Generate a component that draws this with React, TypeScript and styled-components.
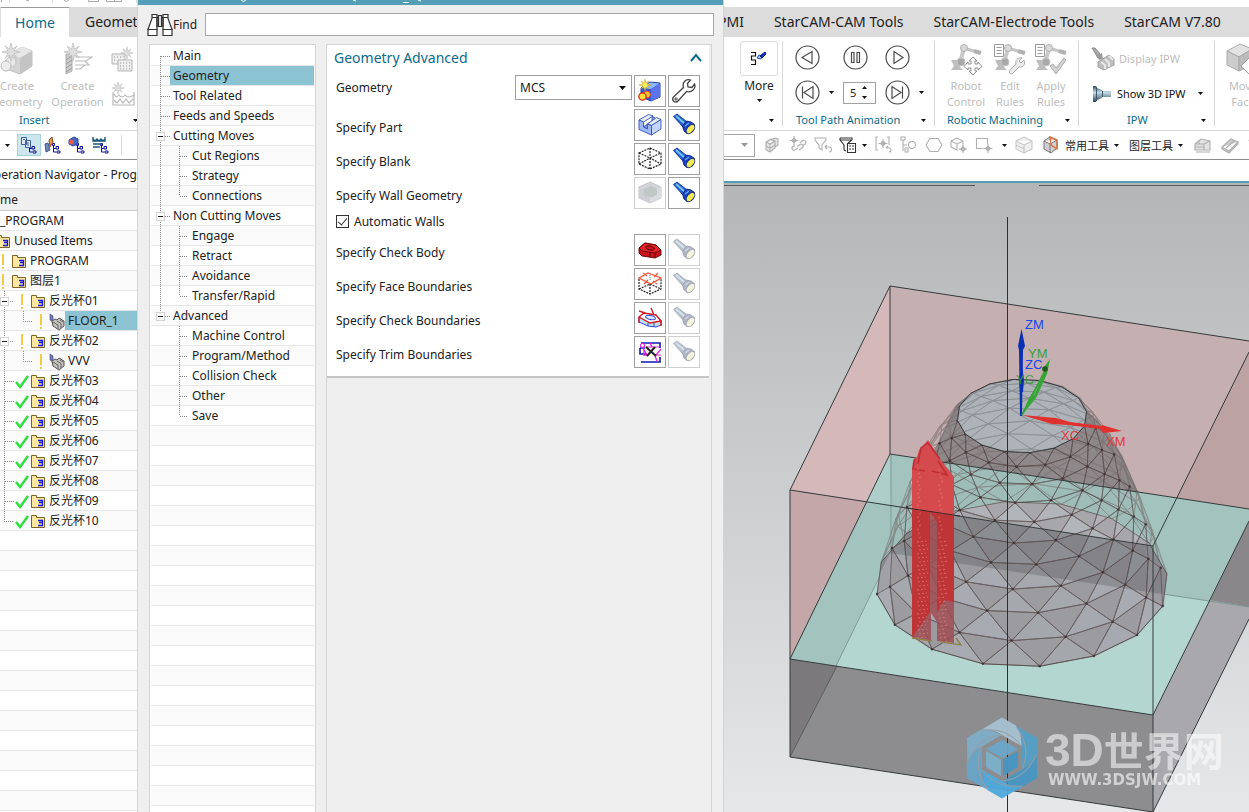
import React from "react";
import styled, { createGlobalStyle, css } from "styled-components";

const GlobalStyle = createGlobalStyle`
  * { box-sizing: border-box; }
  body { margin: 0; background: #fff; }
  body, button, input, select {
    font-family: "Noto Sans", "Noto Sans CJK SC", sans-serif;
    font-size: 12px;
    color: #222;
  }
  button { border: 0; padding: 0; background: none; cursor: pointer; }
  svg { display: block; flex: none; }
  ul { list-style: none; margin: 0; padding: 0; }
`;

const teal = "#0b6a8c";
const accent = "#549fb7";
const selection = "#8cc3d2";

/* ---------- shell ---------- */

const Shell = styled.div`
  display: grid;
  grid-template-columns: 137px 587px minmax(0, 1fr);
  height: 100vh;
  overflow: hidden;
  background: #fff;
`;

const Pane = styled.div`
  display: flex;
  flex-direction: column;
  min-width: 0;
  min-height: 0;
  overflow: hidden;
`;

const QuickBar = styled.div`
  height: 7px;
  flex: none;
  overflow: hidden;
`;

const TabBar = styled.nav<{ $indent?: number; $gap?: number }>`
  display: flex;
  flex: none;
  height: 30px;
  background: #dcdcdc;
  padding-left: ${(p) => p.$indent ?? 0}px;
  gap: ${(p) => p.$gap ?? 0}px;
  white-space: nowrap;
`;

const Tab = styled.button<{ $active?: boolean; $clipped?: boolean; $color?: string }>`
  flex: none;
  font-size: 14px;
  line-height: 30px;
  color: ${(p) => p.$color ?? "#222"};
  ${(p) => p.$clipped && "margin-left: -6px;"}
  ${(p) =>
    p.$active &&
    css`
      width: 68px;
      background: #fff;
      border-top: 1px solid #999;
      color: ${teal};
      line-height: 28px;
    `}
`;

const Ribbon = styled.div`
  display: flex;
  flex: none;
  height: 94px;
  border-bottom: 1px solid #d8d8d8;
  overflow: hidden;
`;

const Group = styled.section<{ $width: number; $last?: boolean }>`
  flex: none;
  display: flex;
  flex-direction: column;
  width: ${(p) => p.$width}px;
  margin: 4px 0;
  border-right: ${(p) => (p.$last ? "0" : "1px solid #d8d8d8")};
`;

const GroupBody = styled.div<{ $pad?: number }>`
  flex: 1;
  display: flex;
  padding-left: ${(p) => p.$pad ?? 0}px;
`;

const GroupTitle = styled.div<{ $pad?: number; $end?: number }>`
  display: flex;
  align-items: center;
  justify-content: space-between;
  height: 12px;
  padding: 0 ${(p) => p.$end ?? 8}px 0 ${(p) => p.$pad ?? 12}px;
  font-size: 11px;
  line-height: 12px;
  color: ${teal};
`;

const BigButton = styled.button<{ $width: number; $muted?: boolean; $clipped?: boolean }>`
  flex: none;
  display: flex;
  flex-direction: column;
  align-items: center;
  width: ${(p) => p.$width}px;
  font-size: ${(p) => (p.$muted ? 11 : 12)}px;
  line-height: 16px;
  color: ${(p) => (p.$muted ? "#bdbdbd" : "#222")};
  white-space: nowrap;
  ${(p) => p.$clipped && "margin-left: -10px;"}
`;

const CaretSlot = styled.span`
  display: grid;
  place-items: center;
  height: 12px;
`;

const IconSlot = styled.span<{ $framed?: boolean }>`
  display: grid;
  place-items: center;
  width: 38px;
  height: 35px;
  margin-bottom: 2px;
  ${(p) => p.$framed && "border: 1px solid #dcdcdc; border-radius: 3px;"}
`;

const SelectionBar = styled.div<{ $pad?: number }>`
  display: flex;
  align-items: center;
  flex: none;
  height: 29px;
  padding-left: ${(p) => p.$pad ?? 0}px;
  border-bottom: 1px solid #8d8d8d;
  white-space: nowrap;
  overflow: hidden;
`;

const ToolButton = styled.button<{ $width?: number; $on?: boolean }>`
  flex: none;
  display: grid;
  place-items: center;
  width: ${(p) => p.$width ?? 24}px;
  height: 22px;
  ${(p) => p.$on && "background: #cde6ec; border: 1px solid #a8d3de;"}
`;

const Divider = styled.span`
  height: 20px;
  margin-left: 8px;
  border-left: 1px solid #d8d8d8;
`;

const MenuButton = styled.button`
  flex: none;
  display: flex;
  align-items: center;
  gap: 5px;
  padding-right: 10px;
  font-size: 11px;
`;

const Caret = ({ color = "#111", up = false }: { color?: string; up?: boolean }) => (
  <svg width="5" height="3" viewBox="0 0 5 3">
    <path d={up ? "M0 3H5L2.5 0Z" : "M0 0H5L2.5 3Z"} fill={color} />
  </svg>
);

/* ---------- ribbon icons ---------- */

const Burst = ({ x, y, fill = "#dedede", stroke = "#bbb" }: { x: number; y: number; fill?: string; stroke?: string }) => (
  <path
    transform={`translate(${x} ${y})`}
    d="M0-9L1.500-3 6-6 3-1.500 9 0 3 1.500 6 6 1.500 3 0 9-1.500 3-6 6-3 1.500-9 0-3-1.500-6-6-1.500-3Z"
    fill={fill}
    stroke={stroke}
    strokeWidth=".7"
  />
);

const CreateGeometryIcon = () => (
  <svg width="34" height="32" viewBox="0 0 34 32">
    <path d="M9 12L22 4 32 8V23L20 31 9 27Z" fill="#d3d3d3" stroke="#c0c0c0" />
    <path d="M9 12L22 4 32 8 20 15Z" fill="#e6e6e6" />
    <path d="M20 15L32 8V23L20 31Z" fill="#c4c4c4" />
    <path d="M4 18L10 14 15 23 8 28Z" fill="#dadada" />
    <circle cx="11" cy="19" r="5" fill="#e8e8e8" stroke="#c4c4c4" />
    <circle cx="6" cy="23" r="5" fill="#ececec" stroke="#bbb" />
    <Burst x={11} y={9} />
  </svg>
);

const CreateOperationIcon = () => (
  <svg width="30" height="32" viewBox="0 0 30 32">
    <path d="M3 11H9V28L3 31Z" fill="#ccc" stroke="#b0b0b0" />
    <path d="M3 17L9 13M3 21L9 17M3 25L9 21M3 29L9 25" stroke="#999" />
    <path d="M12 14H29L23 18H12M12 18H22L26 22H12M12 26H17L22 22" fill="none" stroke="#bcbcbc" strokeWidth="1.200" />
    <Burst x={10} y={9} />
  </svg>
);

const PatternIcon = ({ wave = false }: { wave?: boolean }) => (
  <svg width="24" height="28" viewBox="0 0 24 28">
    {wave ? (
      <path d="M2 12V25H23V12M3 14Q5 19 8 15 11 19 14 15 17 19 23 15M3 20L6 23 9 19 12 23 15 19 18 23 22 19" fill="none" stroke="#b8b8b8" strokeWidth="1.200" />
    ) : (
      <>
        <path d="M1 9H14V19H1Z" fill="#eee" stroke="#b5b5b5" />
        <path d="M7 15H21V26H7Z" fill="#eee" stroke="#b5b5b5" />
        <path d="M3 12H12M3 15H6M9 18H19M9 21H19M9 24H19" stroke="#999" strokeDasharray="1 2" />
      </>
    )}
    <g transform={wave ? "translate(7 8) scale(.7)" : "translate(16 8) scale(.7)"}>
      <Burst x={0} y={0} />
    </g>
  </svg>
);

const RobotIcon = ({ kind }: { kind: "move" | "wrench" | "check" }) => (
  <svg width="34" height="32" viewBox="0 0 34 32">
    {kind !== "move" && (
      <path d="M1.500 1.500H10.500V13.500H1.500ZM3.500 4.500H8.500M3.500 7.500H8.500M3.500 10.500H8.500" fill="#fff" stroke="#9a9a9a" />
    )}
    <path d="M2 17H11V24L14 27H2L5 23Z" fill="#bdbdbd" />
    <path d="M11 19L15 6" stroke="#c9c9c9" strokeWidth="4" />
    <path d="M15 5L31 10" stroke="#c4c4c4" strokeWidth="3" />
    <path d="M25 8L32 10" stroke="#b2b2b2" strokeWidth="4" />
    <circle cx="15" cy="5" r="3.500" fill="#d9d9d9" stroke="#b0b0b0" />
    <circle cx="12" cy="19" r="4" fill="#a8a8a8" stroke="#c4c4c4" />
    {kind === "move" && (
      <path
        d="M24 14L28 18H26V21H29V19L33 23.500 29 27V25H26V28H28L24 32 20 28H22V25H19V27L15 23.500 19 19V21H22V18H20Z"
        fill="#fff"
        stroke="#909090"
      />
    )}
    {kind === "wrench" && (
      <path d="M31 17L28 20 26 18 29 15C24 14 22 18 23 21L18 26C14 30 18 33 21 29L26 24C30 25 33 21 31 17Z" fill="#ececec" stroke="#aaa" />
    )}
    {kind === "check" && <path d="M16 23L19 21 22 25 30 15 32 17 22 31Z" fill="#d2d2d2" stroke="#aaa" />}
  </svg>
);

const MoreIcon = () => (
  <svg width="18" height="16" viewBox="0 0 18 16">
    <path d="M1 1.500H5.500V5H1.500V9H5.500V13.500H1M2 5H5M2 9H5" fill="none" stroke="#111" strokeWidth="1.200" />
    <path d="M7 7L9 4 12 5 11 8Z" fill="#8dd2ff" stroke="#2449b0" />
    <path d="M10 5L15 1 16 3 12 7Z" fill="#1034c8" stroke="#001b7a" />
  </svg>
);

const PlayerIcon = ({ kind }: { kind: "back" | "pause" | "play" | "first" | "last" }) => {
  const paths = {
    back: "M17 6.500V18.500L7 12.500Z",
    pause: "M8.500 7.500H11V17.500H8.500ZM14 7.500H16.500V17.500H14Z",
    play: "M9 6.500V18.500L18 12.500Z",
    first: "M18 6.500V18.500L9 12.500ZM7.500 6.500V18.500",
    last: "M7 6.500V18.500L16 12.500ZM17.500 6.500V18.500",
  };
  return (
    <svg width="25" height="25" viewBox="0 0 25 25">
      <circle cx="12.500" cy="12.500" r="11.500" fill="#fff" stroke="#4a4a4a" strokeWidth="1.200" />
      <path d={paths[kind]} fill="none" stroke="#4a4a4a" strokeWidth="1.200" />
    </svg>
  );
};

const DisplayIpwIcon = () => (
  <svg width="24" height="24" viewBox="0 0 24 24">
    <path d="M1 1L4 1 10 8 7 11Z" fill="#aaa" stroke="#8c8c8c" />
    <path d="M6 9L11 6 12 12 8 13Z" fill="#999" />
    <path d="M7 15L18 8 23 12V18L13 23 7 20Z" fill="#bdbdbd" stroke="#a0a0a0" />
    <path d="M10 15L14 18V22M14 12L18 16V20M18 9L22 13" fill="none" stroke="#e8e8e8" strokeWidth="2" />
  </svg>
);

const ShowIpwIcon = () => (
  <svg width="22" height="18" viewBox="0 0 22 18">
    <defs>
      <linearGradient id="steel" x1="0" y1="0" x2="0" y2="1">
        <stop offset="0" stopColor="#2f4a5a" />
        <stop offset=".4" stopColor="#c3dce8" />
        <stop offset="1" stopColor="#2c4453" />
      </linearGradient>
    </defs>
    <path d="M2 1H5L6 3 11 5V6H20V12H11V13L6 15 5 17H2Z" fill="url(#steel)" />
    <path d="M5.500 2V16M11.500 6V12" stroke="#3f5c6c" />
  </svg>
);

const MoveFaceIcon = () => (
  <svg width="34" height="32" viewBox="0 0 34 32">
    <path d="M1 8L14 1 26 6 13 14Z" fill="#e2e2e2" stroke="#aaa" />
    <path d="M1 8L13 14V28L1 22Z" fill="#cdcdcd" stroke="#aaa" />
    <path d="M13 14L26 6V22L13 28Z" fill="#bcbcbc" stroke="#aaa" />
    <path d="M24 14L33 23 24 32 15 23Z" fill="#fff" stroke="#999" />
  </svg>
);

/* ---------- selection bar icons ---------- */

type NavKind = "program" | "tool" | "geometry" | "method";

const NavViewIcon = ({ kind }: { kind: NavKind }) => (
  <svg width="18" height="18" viewBox="0 0 18 18">
    <path d="M9.500 8V16H12M9.500 12.500H12" fill="none" stroke="#0c0c9c" />
    <path d="M12 10.500H14.500V13H12ZM13 15H16V17H13ZM8.500 7.500H10.500V9.500H8.500Z" fill="#fff" stroke="#0c0c9c" />
    {kind === "program" && (
      <path d="M1.500 1.500H6.500V8.500H1.500ZM5.500 4.500H10.500V11.500H5.500ZM3 3.500H5M7 7H9M7 9H9" fill="#dfe6f4" stroke="#3e5f9b" />
    )}
    {kind === "tool" && (
      <>
        <path d="M1 8L4 7 6 14 2 16Z" fill="#7187b8" stroke="#3f5793" />
        <path d="M5 4L8 1 9 6 6 11Z" fill="#e49a4d" stroke="#8b4a24" />
      </>
    )}
    {kind === "geometry" && (
      <>
        <path d="M1 4L6 1 10 3V8L5 10 1 8Z" fill="#4468c8" stroke="#2d4390" />
        <circle cx="3.500" cy="6" r="2.500" fill="#e55a4c" />
      </>
    )}
    {kind === "method" && (
      <path d="M1 1V5H13V1M1 3L3 5 5 3 7 5 9 3 11 5 13 3M1 8H10M1 11H8" fill="none" stroke="#1c5a78" strokeWidth="1.400" />
    )}
  </svg>
);

const GlyphIcon = ({ d, color = "#b0b0b0", fill = "none" }: { d: string; color?: string; fill?: string }) => (
  <svg width="18" height="18" viewBox="0 0 18 18">
    <path d={d} fill={fill} stroke={color} strokeWidth="1.100" />
  </svg>
);

const glyphs = {
  blocks: "M3 6L8 3 12 5V12L7 16 3 14ZM8 4L12 2 15 3V9L12 11M3 6L7 8 12 5M7 8V16M3 10L7 12 12 9",
  target: "M3 1H1V14H3M12 1H14V9M8 3V12M3.500 7.500H12.500M8 5L10.500 7.500 8 10 5.500 7.500ZM11 12H14A2 2 0 0 1 14 16M11 12L13 10",
  chain: "M5 0V9M0.500 4.500H9.500M5 2L7.500 4.500 5 7 2.500 4.500ZM8 10.500L11 8.500A2 2 0 0 1 13 12L10 14M9 12L6 14A2 2 0 0 1 4 10.500L6 9.500M11 6.500L14 4.500A2 2 0 0 1 16 8L14 9.500",
  funnelBack: "M1 2H12V4L8 9V14L5 12V9L1 4ZM11 11H15A2 2 0 0 1 15 16M11 11L13 9M11 11L13 13",
  funnelList: "M1 2H13V4L9 7M1 4L5 9V14L7 15M1 2V4H12M8.500 7.500H16.500V16.500H8.500ZM10 10H12M13 10H15M10 13H12M13 13H15",
  tree: "M1 1H5V4H1ZM3 4V15M3 9H7M5 12H8V16H5V12M9 6H11M12 5.500A3.500 3.500 0 1 1 12 12.500 3.500 3.500 0 1 1 12 5.500",
  hexagon: "M5 2.500H13L17 9 13 15.500H5L1 9Z",
  cubeTarget: "M1 5L7 2 13 5V9M1 5L7 8 13 5M1 5V11L7 14V8M13 9V17M9 13H17M13 10.500L15.500 13 13 15.500 10.500 13Z",
  boxTarget: "M8 12.500H1.500V2.500H12.500V8M13 8V17M8.500 12.500H17.500M13 10L15.500 12.500 13 15 10.500 12.500Z",
  cube: "M1 5L9 1 17 5V13L9 17 1 13ZM1 5L9 9 17 5M9 9V17M1 9L9 13",
  cubeOpen: "M2 5L8 1 15 4V12L9 17 2 13ZM2 5L8 8 15 4M8 8V17",
  box: "M1 8L7 3 16 5V14H1ZM1 8H10V14M10 8L16 5M5 4V8M1 11H10M2 16H16",
  plate: "M1 11L10 3 17 6 8 15ZM5 12L13 5M1 11V13L8 17 17 8V6",
};

/* ---------- operation navigator ---------- */

const NavTitle = styled.h2`
  flex: none;
  margin: 0;
  height: 29px;
  font-size: 12px;
  font-weight: 400;
  line-height: 29px;
  white-space: nowrap;
  direction: rtl;
  border-bottom: 1px solid #ddd;
`;

const NavHeader = styled.div`
  flex: none;
  height: 22px;
  background: #efefef;
  border-bottom: 1px solid #ccc;
  line-height: 22px;
`;

const TreeList = styled.ul`
  flex: 1;
  min-height: 0;
  overflow: hidden;
  background: repeating-linear-gradient(#fff 0 19px, #e6e6e6 19px 20px, #fafafa 20px 39px, #e6e6e6 39px 40px);
`;

const TreeRow = styled.li`
  display: flex;
  height: 20px;
  white-space: nowrap;
`;

const TreeLabel = styled.button<{ $selected?: boolean; $flush?: boolean }>`
  flex: 1;
  height: 19px;
  padding-left: ${(p) => (p.$flush ? 0 : 3)}px;
  line-height: 19px;
  text-align: left;
  background: ${(p) => (p.$selected ? selection : "transparent")};
`;

const dots = { stroke: "#888", strokeDasharray: "1 1", fill: "none" };

const FolderIcon = ({ x }: { x: number }) => (
  <g transform={`translate(${x} 3)`}>
    <path d="M.5 13.500V1.500H5.500V3.500H13.500V13.500Z" fill="#fbe79f" stroke="#7d6425" />
    <path d="M7 6.500H11.500V8.500H8M8 8.500H11.500V11.500H7" fill="none" stroke="#1616e0" strokeWidth="1.300" />
  </g>
);

const Exclaim = ({ x }: { x: number }) => (
  <g fill="#f7c948">
    <rect x={x} y="3" width="2" height="11" />
    <rect x={x} y="16" width="2" height="2" />
  </g>
);

const Minus = ({ x }: { x: number }) => (
  <g>
    <rect x={x - 4 + 0.5} y="6.500" width="8" height="8" fill="#fff" stroke="#d2d2d2" />
    <path d={`M${x - 2} 10.500H${x + 3}`} stroke="#222" />
  </g>
);

const OperationIcon = ({ x }: { x: number }) => (
  <g transform={`translate(${x} 2)`}>
    <path d="M1 1L4 3V9L1 7Z" fill="#6d72b4" stroke="#474a80" strokeWidth=".6" />
    <path d="M3 8L6 6 8 7 10 5 15 8V13L10 17 4 13Z" fill="#c6c2be" stroke="#555" />
    <path d="M4 9L9 12V16M8 8L12 10.500V15M11 7L14 9" stroke="#666" fill="none" />
  </g>
);

type NavNode = { kind: "root" | "unused" | "top" | "group" | "op" | "done" | "last"; name: string; selected?: boolean };

const navNodes: NavNode[] = [
  { kind: "root", name: "_PROGRAM" },
  { kind: "unused", name: "Unused Items" },
  { kind: "top", name: "PROGRAM" },
  { kind: "top", name: "图层1" },
  { kind: "group", name: "反光杯01" },
  { kind: "op", name: "FLOOR_1", selected: true },
  { kind: "group", name: "反光杯02" },
  { kind: "op", name: "VVV" },
  ...["03", "04", "05", "06", "07", "08", "09"].map((n) => ({ kind: "done" as const, name: "反光杯" + n })),
  { kind: "last", name: "反光杯10" },
];

const navIndent = { root: 0, unused: 11, top: 27, group: 46, op: 65, done: 46, last: 46 };

const NavGuide = ({ kind }: { kind: NavNode["kind"] }) => {
  const w = navIndent[kind];
  if (!w) return null;
  return (
    <svg width={w} height="20" viewBox={`0 0 ${w} 20`}>
      {kind === "unused" && <FolderIcon x={-4} />}
      {kind === "top" && (
        <>
          <Exclaim x={2} />
          <FolderIcon x={12} />
        </>
      )}
      {kind === "group" && (
        <>
          <path d="M4.500 0V20M8 10.500H14" {...dots} />
          <Minus x={4} />
          <Exclaim x={21} />
          <FolderIcon x={31} />
        </>
      )}
      {kind === "op" && (
        <>
          <path d="M4.500 0V20M23.500 0V10.500H32" {...dots} />
          <Exclaim x={40} />
          <OperationIcon x={49} />
        </>
      )}
      {(kind === "done" || kind === "last") && (
        <>
          <path d={kind === "last" ? "M4.500 0V10.500H14" : "M4.500 0V20M5 10.500H14"} {...dots} />
          <path d="M16 11L20 16 28 5" fill="none" stroke="#2be03b" strokeWidth="2.400" />
          <FolderIcon x={31} />
        </>
      )}
    </svg>
  );
};

/* ---------- dialog ---------- */

const Dialog = styled.section`
  display: flex;
  flex-direction: column;
  min-height: 0;
  background: #efefef;
  border: solid #d4d4d4;
  border-width: 0 1px;
`;

const DialogTitle = styled.header`
  flex: none;
  height: 5px;
  background: ${accent};
`;

const FindRow = styled.label`
  display: flex;
  align-items: center;
  flex: none;
  height: 39px;
  padding: 0 9px;
`;

const FindInput = styled.input`
  flex: 1;
  height: 23px;
  margin-left: 8px;
  border: 1px solid #a6a6a6;
  background: #fff;
`;

const DialogBody = styled.div`
  flex: 1;
  min-height: 0;
  display: flex;
  gap: 10px;
  padding: 0 11px;
`;

const SidePanel = styled.nav`
  display: flex;
  width: 167px;
  padding: 1px 1px 0;
  border: 1px solid #d4d4d4;
  border-bottom: 0;
  background: #fff;
`;

const MainPanel = styled.div`
  flex: 1;
  padding-right: 2px;
  border: 1px solid #d4d4d4;
  border-bottom: 0;
`;

const Section = styled.section`
  padding: 0 9px 6px;
  background: #fff;
  border-bottom: 2px solid #c6c6c6;
`;

const SectionHead = styled.button`
  display: flex;
  align-items: center;
  justify-content: space-between;
  width: 100%;
  height: 30px;
  padding: 0 0 5px;
  margin-left: -2px;
  font-size: 14px;
  color: ${teal};
`;

const SectionHeadArrow = styled.span`
  margin-right: -4px;
`;

const FieldRow = styled.div<{ $top?: boolean }>`
  display: flex;
  align-items: ${(p) => (p.$top ? "flex-start" : "center")};
  gap: 2px;
  height: 32px;
  margin-bottom: 2px;
`;

const FieldLabel = styled.label<{ $top?: boolean }>`
  flex: 1;
  padding-top: ${(p) => (p.$top ? 4 : 5)}px;
  line-height: 17px;
`;

const IconButton = styled.button`
  display: grid;
  place-items: center;
  width: 32px;
  height: 32px;
  background: #fff;
  border: 1px solid #a0a0a0;
  &:disabled {
    border-color: #cfcfcf;
    cursor: default;
  }
  &:disabled svg {
    opacity: 0.4;
    filter: saturate(0.35);
  }
`;

const SelectBox = styled.div`
  display: grid;
  align-items: center;
  width: 117px;
  height: 25px;
  & > * {
    grid-area: 1 / 1;
  }
  svg {
    justify-self: end;
    margin-right: 6px;
    pointer-events: none;
  }
`;

const Select = styled.select`
  appearance: none;
  width: 100%;
  height: 25px;
  padding: 0 4px;
  border: 1px solid #a0a0a0;
  border-radius: 0;
  background: #fff;
`;

const CheckRow = styled.label`
  display: flex;
  align-items: center;
  gap: 5px;
  height: 21px;
  margin-bottom: 2px;
`;

const CheckBox = styled.input`
  appearance: none;
  display: grid;
  place-items: center;
  width: 13px;
  height: 13px;
  margin: 0;
  border: 1px solid #333;
  background: #fff;
  &:checked::after {
    content: "";
    width: 4px;
    height: 8px;
    margin-top: -2px;
    border: solid #333;
    border-width: 0 1px 1px 0;
    transform: rotate(40deg);
  }
`;

type TreeNode = { name: string; level: 1 | 2; open?: boolean; end?: boolean; selected?: boolean };

const dialogNodes: TreeNode[] = [
  { name: "Main", level: 1 },
  { name: "Geometry", level: 1, selected: true },
  { name: "Tool Related", level: 1 },
  { name: "Feeds and Speeds", level: 1 },
  { name: "Cutting Moves", level: 1, open: true },
  { name: "Cut Regions", level: 2 },
  { name: "Strategy", level: 2 },
  { name: "Connections", level: 2, end: true },
  { name: "Non Cutting Moves", level: 1, open: true },
  { name: "Engage", level: 2 },
  { name: "Retract", level: 2 },
  { name: "Avoidance", level: 2 },
  { name: "Transfer/Rapid", level: 2, end: true },
  { name: "Advanced", level: 1, open: true },
  { name: "Machine Control", level: 2 },
  { name: "Program/Method", level: 2 },
  { name: "Collision Check", level: 2 },
  { name: "Other", level: 2 },
  { name: "Save", level: 2, end: true },
];

const DialogGuide = ({ node, index }: { node: TreeNode; index: number }) => {
  const w = node.level === 1 ? 19 : 38;
  const rootLine = index === 0 ? "M9.500 10V20" : index < 13 ? "M9.500 0V20" : index === 13 ? "M9.500 0V10" : "";
  return (
    <svg width={w} height="20" viewBox={`0 0 ${w} 20`}>
      {rootLine && <path d={rootLine} {...dots} />}
      {node.level === 1 ? (
        <path d="M10 10.500H19" {...dots} />
      ) : (
        <path d={`M28.500 0V${node.end ? 10 : 20}M29 10.500H37`} {...dots} />
      )}
      {node.open && <Minus x={9} />}
    </svg>
  );
};

const Binoculars = () => (
  <svg width="26" height="24" viewBox="0 0 26 24">
    <g fill="#fff" stroke="#333" strokeWidth="1.200">
      <path d="M1 16.500H10V22.500H1ZM16 16.500H25V22.500H16Z" />
      <path d="M1 16.500L5 5.500V1.500H10V16.500ZM25 16.500L21 5.500V1.500H16V16.500Z" />
      <path d="M10 4.500H16V13.500H10ZM5 4.500H10M16 4.500H21" fill="none" />
      <path d="M11.500 13V2.500H14.500V13" fill="#efefef" />
    </g>
  </svg>
);

const Flashlight = () => (
  <svg width="24" height="24" viewBox="0 0 24 24">
    <path d="M1.500 3.500L5 1 14.500 8.500 10.500 13.500Z" fill="#2565cf" stroke="#123a9c" strokeWidth=".9" />
    <path d="M4 3L12 10" stroke="#7cc0ef" strokeWidth="1.800" />
    <path d="M10.500 13L14.500 8 19 9 22.500 11.500 15 20.500 12 18Z" fill="#1746c8" stroke="#0a1f80" strokeWidth=".9" />
    <path d="M13 13L17 10" stroke="#6aa6ee" strokeWidth="1.400" />
    <ellipse cx="18.500" cy="16" rx="5.400" ry="3.200" transform="rotate(-50 18.500 16)" fill="#f4ea52" stroke="#1a2c80" />
  </svg>
);

const GeometryNewIcon = () => (
  <svg width="24" height="24" viewBox="0 0 24 24">
    <path d="M3 9L12 3 22 4V18L13 22 3 18Z" fill="#3557d8" stroke="#2440a8" />
    <path d="M4 9L12 3.500 21.500 4.500 13 10Z" fill="#8fb8fb" />
    <path d="M13 10L22 4.500V18L13 22Z" fill="#5a74ee" />
    <circle cx="9" cy="15.500" r="3.400" fill="#ffc52e" stroke="#e4452a" />
    <circle cx="4.500" cy="17.500" r="3.600" fill="#ffdf3a" stroke="#e4301a" strokeWidth="1.400" />
    <g transform="translate(7 6) scale(.68)">
      <Burst x={0} y={0} fill="#fdf05a" stroke="#b99a18" />
    </g>
  </svg>
);

const WrenchIcon = () => (
  <svg width="24" height="24" viewBox="0 0 24 24">
    <path
      d="M18.500 1C14-.5 10 3.500 11.500 8.500L1.500 18C-1 21 3.500 25 6 22L14.500 12.500C19.500 14 24.500 9.500 22.500 5L20 8.500 16 8 15.500 4.500Z"
      fill="#fff"
      stroke="#444"
      strokeWidth="1.300"
    />
    <circle cx="4" cy="20" r="1.200" fill="none" stroke="#444" />
  </svg>
);

const PartIcon = () => (
  <svg width="24" height="24" viewBox="0 0 24 24">
    <g stroke="#3a50c0" strokeWidth=".9" strokeLinejoin="round">
      <path d="M5 14L14 8V3L17 5 9 16Z" fill="#7a97ea" />
      <path d="M1 7L10.500 1.500 15 3 5.500 9Z" fill="#e6efff" />
      <path d="M9.500 11L18.500 4.500 23 6.500 13.500 12.500Z" fill="#e6efff" />
      <path d="M1 7L5.500 9V14L9.500 16V11L13.500 12.500V22L1 16.500Z" fill="#9db9f8" />
      <path d="M13.500 12.500L23 6.500V16L13.500 22Z" fill="#c3d6ff" />
    </g>
  </svg>
);

const BlankIcon = () => (
  <svg width="24" height="24" viewBox="0 0 24 24">
    <path
      d="M1 6L12 1 23 6V17L12 22 1 17ZM1 6L12 11 23 6M12 11V22M12 1V10M1 17L12 11 23 17"
      fill="none"
      stroke="#222"
      strokeWidth="1.200"
      strokeDasharray="2 1"
    />
  </svg>
);

const FaceBoundaryIcon = () => (
  <svg width="24" height="24" viewBox="0 0 24 24">
    <path d="M1 7V17L12 22 23 17V7M12 12V22M1 17L12 12 23 17" fill="none" stroke="#222" strokeWidth="1.200" strokeDasharray="2 1" />
    <path d="M1 6L10 1 23 6 13 12ZM5 1L9 4M20 1L16 5M6 12L10 8M15 9L19 12" fill="#fff" stroke="#f0583a" strokeWidth="1.300" />
    <path d="M12 3V8" stroke="#777" strokeDasharray="1 1" />
  </svg>
);

const WallIcon = () => (
  <svg width="24" height="24" viewBox="0 0 24 24">
    <path d="M1 6L12 1 23 6V17L12 22 1 17Z" fill="#8a96b8" stroke="#6a7084" />
    <path d="M5 8L13 5 19 8V14L15 17 6 14Z" fill="#4f7c70" />
    <path d="M1 7L5 8 6 14 12 17V22L1 17Z" fill="#80879e" />
    <path d="M12 17L19 14V8L23 6V17L12 22Z" fill="#a2a7b8" />
  </svg>
);

const CheckBodyIcon = () => (
  <svg width="24" height="24" viewBox="0 0 24 24">
    <g stroke="#5e0508" strokeWidth=".9">
      <path d="M1 10L7 5 18 7 23 12V17L17 20 4 18 1 15Z" fill="#c9141c" />
      <path d="M1 10L7 5 18 7 23 12 17 15 4 13Z" fill="#e2232c" />
      <ellipse cx="12" cy="10" rx="4.500" ry="2" transform="rotate(14 12 10)" fill="#c4141c" />
      <path d="M17 15V20M12 14.500V19" />
    </g>
  </svg>
);

const CheckBoundaryIcon = () => (
  <svg width="24" height="24" viewBox="0 0 24 24">
    <path d="M1 11V16L10 20 18 21 23 19V14L16 16Z" fill="#bfe0ec" stroke="#3448d8" />
    <path d="M1 11L6 7 18 9 23 15 12 17Z" fill="#fff" stroke="#d41a22" strokeWidth="1.400" />
    <path d="M1 5L7 7M13 2L16 9M1 11V17M23 15V20" stroke="#d41a22" strokeWidth="1.400" />
    <ellipse cx="12.500" cy="11.500" rx="5" ry="2" transform="rotate(12 12.500 11.500)" fill="#dfe6ff" stroke="#3448d8" />
    <path d="M10 17V20M16 17V21" stroke="#3448d8" />
  </svg>
);

const TrimIcon = () => (
  <svg width="24" height="24" viewBox="0 0 24 24">
    <path d="M3 3H22V8M2 8V14H9M2 8H7M3 22H22V17" fill="none" stroke="#1414b4" strokeWidth="1.600" />
    <path d="M12 3L14 7M6 10V15H9M17 16L19 21" stroke="#e020d8" strokeWidth="1.400" fill="none" />
    <circle cx="4.500" cy="5.500" r="2" fill="none" stroke="#e020d8" strokeWidth="1.200" />
    <path d="M5 8L9 15M23 9L18 15H23M8 7H21" fill="none" stroke="#e020d8" strokeWidth="1.200" />
    <path d="M8 7L18 16M17 7L9 16" stroke="#222" strokeWidth="2" />
  </svg>
);

type Field = { name: string; icon: React.ReactNode; muted?: boolean; lamp: boolean };

const upperFields: Field[] = [
  { name: "Specify Part", icon: <PartIcon />, lamp: true },
  { name: "Specify Blank", icon: <BlankIcon />, lamp: true },
  { name: "Specify Wall Geometry", icon: <WallIcon />, muted: true, lamp: true },
];

const lowerFields: Field[] = [
  { name: "Specify Check Body", icon: <CheckBodyIcon />, lamp: false },
  { name: "Specify Face Boundaries", icon: <FaceBoundaryIcon />, lamp: false },
  { name: "Specify Check Boundaries", icon: <CheckBoundaryIcon />, lamp: false },
  { name: "Specify Trim Boundaries", icon: <TrimIcon />, lamp: false },
];

const FieldLine = ({ field }: { field: Field }) => {
  const id = field.name.replace(/ /g, "-").toLowerCase();
  return (
    <FieldRow>
      <FieldLabel htmlFor={id}>{field.name}</FieldLabel>
      <IconButton id={id} disabled={field.muted}>
        {field.icon}
      </IconButton>
      <IconButton aria-label={`Display ${field.name}`} disabled={!field.lamp}>
        <Flashlight />
      </IconButton>
    </FieldRow>
  );
};

/* ---------- player controls ---------- */

const PlayerGrid = styled.div`
  display: grid;
  grid-template-columns: 25px 23px 33px 9px 25px 23px;
  grid-template-rows: 33px 37px;
  align-items: center;
  justify-items: center;
`;

const RoundButton = styled.button<{ $column: number }>`
  grid-column: ${(p) => p.$column};
  justify-self: start;
`;

const Spinner = styled.div`
  display: flex;
  align-items: center;
  grid-column: 3;
  width: 33px;
  height: 22px;
  border: 1px solid #a0a0a0;
`;

const SpinnerInput = styled.input`
  width: 18px;
  padding: 0 0 0 6px;
  border: 0;
  font-size: 11px;
`;

const SpinnerButtons = styled.div`
  display: grid;
  gap: 7px;
`;

const Commands = styled.div`
  display: flex;
  flex-direction: column;
`;

const Command = styled.button<{ $muted?: boolean }>`
  display: flex;
  align-items: center;
  gap: 4px;
  height: 35px;
  font-size: 11px;
  color: ${(p) => (p.$muted ? "#bdbdbd" : "#111")};
`;

const CommandText = styled.span`
  width: 77px;
  text-align: left;
`;

const ComboEnd = styled.button`
  flex: none;
  display: grid;
  place-items: center end;
  width: 31px;
  height: 23px;
  padding-right: 6px;
  border: solid #a6a6a6;
  border-width: 1px 1px 1px 0;
`;

const DocumentBar = styled.div`
  flex: none;
  height: 23px;
  border-bottom: 2px solid ${accent};
`;

const Viewport = styled.main`
  flex: 1;
  min-height: 0;
  background: linear-gradient(#b4b5b6, #c6c7c8 35%, #e6e7e9);
  svg {
    width: 100%;
    height: 100%;
  }
`;

/* ---------- 3D scene ---------- */

const rings = [
  { r: 146, y: 584 },
  { r: 139, y: 562 },
  { r: 131, y: 539 },
  { r: 124, y: 519 },
  { r: 116, y: 499 },
  { r: 108, y: 482 },
  { r: 101, y: 465 },
  { r: 92.5, y: 450.5 },
  { r: 83, y: 437.5 },
  { r: 74, y: 425 },
  { r: 65, y: 416 },
];
const SIDES = 16;

type Point = { x: number; y: number; front: boolean };

const vertex = (k: number, j: number): Point => {
  const start = k % 2 === 0 ? 7 : -4.25;
  const a = ((start + j * 22.5) * Math.PI) / 180;
  return { x: 1022 + rings[k].r * Math.sin(a), y: rings[k].y + rings[k].r * 0.567 * Math.cos(a), front: Math.cos(a) > -0.05 };
};

const pts = (list: Point[]) => list.map((p) => `${p.x.toFixed(1)},${p.y.toFixed(1)}`).join(" ");
const ringPoints = (k: number) => Array.from({ length: SIDES }, (_, j) => vertex(k, j));

type Facet = { points: Point[]; front: boolean; shade: number };
const facets: Facet[] = [];
for (let k = 0; k < rings.length - 1; k++) {
  for (let j = 0; j < SIDES; j++) {
    const step = k % 2 === 0 ? 1 : -1;
    const a = vertex(k, j);
    const b = vertex(k, j + step);
    const c = vertex(k + 1, j + step);
    const d = vertex(k + 1, j);
    [
      { points: [a, b, k % 2 === 0 ? c : c], up: true },
      { points: [a, c, d], up: false },
    ].forEach((t) =>
      facets.push({
        points: t.points,
        front: t.points.every((p) => p.front),
        shade: (t.up ? 0.5 : 0) + ((j * 7 + k * 3) % 5) / 10,
      })
    );
  }
}
const frontFacets = facets.filter((f) => f.front);
const backFacets = facets.filter((f) => !f.front);
const silhouette =
  "M957 404L936 447 913 482 894 520 885 553 877 596 894 626 931 650 982 664 1040 667 1097 656 1138 636 1165 606 1168 573 1153 530 1138 492 1122 455 1101 425 1087 410 1081 398 1063 386 1040 380 1011 379 988 384 968 396Z";

const DomeMesh = () => (
  <>
    <path d={silhouette} fill="#86878c" opacity=".1" />
    <g clipPath="url(#aboveFloor)">
      <path d={silhouette} fill="#77777b" opacity=".68" />
    </g>
    <g fill="none" stroke="#6f6464" strokeWidth=".6" opacity=".6">
      {backFacets.map((f, i) => (
        <polygon key={i} points={pts(f.points)} />
      ))}
    </g>
    <polygon points={pts(ringPoints(0))} fill="#a0a2a7" stroke="#5a4c4c" strokeWidth=".8" />
    <g clipPath="url(#disc)">
      {frontFacets.map((f, i) => (
        <polygon key={i} points={pts(f.points)} fill={f.shade > 0.45 ? "#b4bac2" : "#858489"} opacity={f.shade > 0.45 ? f.shade * 0.45 : 0.2} />
      ))}
      <path d="M790 490L1153 546 1249 352V607L890 553 790 757Z" fill="#3c3c40" opacity=".24" />
      <path d="M790 400H1249V561L790 490Z" fill="#fff" opacity=".12" />
    </g>
    <g fill="none" stroke="#4e3d3e" strokeWidth=".8" opacity=".7">
      {frontFacets.map((f, i) => (
        <polygon key={i} points={pts(f.points)} />
      ))}
    </g>
    <g fill="#3d2c2d" opacity=".8">
      {rings.map((_, k) =>
        ringPoints(k)
          .filter((p) => p.front)
          .map((p, j) => <circle key={`${k}-${j}`} cx={p.x} cy={p.y} r="1.300" />)
      )}
    </g>
    <polygon points={pts(ringPoints(10))} fill="#adb3b9" />
    <g clipPath="url(#cap)" fill="none" stroke="#8b8f93" strokeWidth=".7">
      {backFacets.map((f, i) => (
        <polygon key={i} points={pts(f.points)} />
      ))}
    </g>
    <polygon points={pts(ringPoints(10))} fill="none" stroke="#3a3a3c" />
  </>
);

const ToolPath = () => {
  const strokes: string[] = [];
  for (let i = 0; i < 44; i++) {
    const y = 470 + i * 4;
    strokes.push(`M${917 + (i % 3)} ${y}l${y > 540 ? 9 : 2} -1`);
    strokes.push(`M${938 + (i % 4)} ${y}l${y > 540 ? 8 : 2} -1`);
  }
  return (
    <>
      <path d="M912 637L931 641V613L937 622V641L954 643V477L912 470Z" fill="#a04c51" opacity=".85" />
      <path d="M912 637L930 612V510L912 508ZM937 612L944 600 954 602V513L937 511Z" fill="#bf3437" />
      <path d="M912 561V470L913 460 917 457 919 450 928 440 940 459 954 477V516L912 509Z" fill="#d54b4d" />
      <path d="M912 509L954 516V600L944 600 937 612V522L930 512V612L912 637Z" fill="#bf3437" />
      <path d="M918 464L921 448 928 443 940 459M915 459L913 469 925 471M932 471L947 475 938 461" fill="none" stroke="#c02d30" strokeWidth="1.500" />
      <path d={strokes.join("")} stroke="#d98a8a" strokeWidth=".8" strokeDasharray="2 2" opacity=".8" fill="none" />
      <path d="M912 638L932 641M941 642L961 645 956 638" stroke="#8d814c" strokeWidth="1.300" fill="none" />
    </>
  );
};

const Axes = () => (
  <g fontFamily="Liberation Sans, sans-serif" fontSize="13">
    <path d="M1020 416L1019 350 1018 346 1021.500 329 1025 346 1023 350 1022 416Z" fill="#0a2fb4" />
    <path d="M1019 380L1021.500 362 1024 380 1023 392H1020Z" fill="#0a2fb4" />
    <path d="M1022 415L1029 398 1035 389 1034 396 1045 371 1042 370 1050 359 1047 374 1036 398Z" fill="#37a536" />
    <path d="M1022 415L1046 369" stroke="#37a536" strokeWidth="2" />
    <circle cx="1045" cy="369" r="2.800" fill="#1d5c1d" />
    <path d="M1022 415L1056 418 1070 422 1102 426V425L1122 431 1103 433 1100 429 1068 425 1052 424Z" fill="#e0312f" />
    <text x="1025" y="329" fill="#1746f0">ZM</text>
    <text x="1028" y="358" fill="#38a03a">YM</text>
    <text x="1025" y="369" fill="#1746f0">ZC</text>
    <text x="1016" y="384" fill="#38a03a" opacity=".85">YC</text>
    <text x="1061" y="440" fill="#e03a3a">XC</text>
    <text x="1106" y="446" fill="#e03a3a">XM</text>
  </g>
);

const bladeColors = ["#a6c1d2", "#559fc6", "#4797c4", "#4ea9dc", "#6aa5c8", "#7fadc8"];

const Watermark = () => (
  <g>
    <g transform="translate(1002 758)" opacity=".95">
      {bladeColors.map((c, i) => (
        <path
          key={c}
          transform={`rotate(${i * 60})`}
          d="M-21 -28L0 -40.500 14 -32.500Q20 -24 19.500 -12L0 -23Q-10 -30 -21 -28Z"
          fill={c}
        />
      ))}
      {bladeColors.map((c, i) => (
        <path key={c} transform={`rotate(${i * 60})`} d="M-20 -28Q6 -31 19.500 -12" fill="none" stroke="#93a1ab" strokeWidth="1" />
      ))}
      <path d="M0 -18L16 -9 0 0 -16 -9Z" fill="#6ba7c9" />
      <path d="M-16 -7L-1 1.500V18L-16 9Z" fill="#7db0cc" />
      <path d="M16 -7L1 1.500V18L16 9Z" fill="#4797c4" />
    </g>
    <text x="1045" y="766" fill="#fff" opacity=".55" fontWeight="700">
      <tspan fontFamily="Liberation Sans, sans-serif" fontSize="46">3D</tspan>
      <tspan fontFamily="Noto Sans CJK SC, sans-serif" fontSize="40">世界网</tspan>
    </text>
    <text x="1048" y="785" fill="#fff" opacity=".6" fontFamily="DejaVu Sans, sans-serif" fontWeight="700" fontSize="15">
      WWW.3DSJW.COM
    </text>
  </g>
);

const Scene = () => (
  <svg viewBox="724 183 525 629" preserveAspectRatio="xMinYMin slice">
    <defs>
      <clipPath id="disc">
        <polygon points={pts(ringPoints(0))} />
      </clipPath>
      <clipPath id="cap">
        <polygon points={pts(ringPoints(10))} />
      </clipPath>
      <clipPath id="aboveFloor">
        <path d="M724 183H1249V509L890 454 724 454Z" />
      </clipPath>
    </defs>
    <path d="M724 185.500H975M1039 185.500H1249" stroke="#555a5a" />
    <path d="M890 286L790 490V659L890 454Z" fill="#d5b8ba" />
    <path d="M890 286L1249 341V509L890 454Z" fill="#c5afb0" />
    <path d="M1249 352L1176 499 1249 510Z" fill="#b89c9d" opacity=".7" />
    <path d="M790 490L873 502 790 659Z" fill="#c3a7a9" />
    <path d="M790 659L1153 715V812L790 757Z" fill="#8d8d90" />
    <path d="M790 659L837 666 790 757Z" fill="#7b797c" />
    <path d="M1153 715L1249 521V619L1153 812Z" fill="#a9a8ac" />
    <path d="M1249 521L1210 600 1249 607Z" fill="#8a878b" />
    <path d="M890 454L1249 509V521L1153 715 790 659Z" fill="#b3d6d1" />
    <path d="M890 454L1249 509V521L1210 601 890 553 836 666 790 659Z" fill="#a2c3be" />
    <path d="M890 454L891 505 867 502Z" fill="#b6d6d1" opacity=".6" />
    <g stroke="#7f9996" fill="none">
      <path d="M891 454V553L836 666M891 553L1249 607" />
    </g>
    <DomeMesh />
    <g stroke="#343a3a" fill="none">
      <path d="M890 286L1249 341M890 286L790 490V757L1153 812M890 286V454M890 454L1249 509M890 454L790 659L1153 715M1153 546V812M790 490L1153 546L1249 352M1153 715L1249 521M1153 812L1249 619" />
      <path d="M837 666L790 757" opacity=".5" />
    </g>
    <ToolPath />
    <path d="M907 508L960 516" stroke="#3b2626" />
    <path d="M1007.500 217V812" stroke="#2b2f30" />
    <Axes />
    <Watermark />
  </svg>
);

/* ---------- page ---------- */

export default function App() {
  return (
    <Shell>
      <GlobalStyle />
      <Pane>
        <QuickBar>
          <svg width="137" height="3" viewBox="0 0 137 3">
            <path d="M1.500 0V2M26 0L29 1M64 0Q66 3 69 0M88.500 0V1.500H98.500V0M106.500 0V1.500H121.500V0M114.500 0V1" fill="none" stroke="#aaa" />
            <path d="M9.500 0V3M52.500 0V3M136.500 0V3" stroke="#ddd" />
          </svg>
        </QuickBar>
        <TabBar $indent={1} $gap={16}>
          <Tab $active>Home</Tab>
          <Tab>Geometry</Tab>
        </TabBar>
        <Ribbon>
          <Group $width={138} $last>
            <GroupBody>
              <BigButton $width={54} $muted $clipped>
                <IconSlot><CreateGeometryIcon /></IconSlot>
                <span>Create</span>
                <span>Geometry</span>
              </BigButton>
              <BigButton $width={67} $muted>
                <IconSlot><CreateOperationIcon /></IconSlot>
                <span>Create</span>
                <span>Operation</span>
              </BigButton>
              <Commands>
                <Command $muted aria-label="Pattern"><PatternIcon /></Command>
                <Command $muted aria-label="Surface"><PatternIcon wave /></Command>
              </Commands>
            </GroupBody>
            <GroupTitle $pad={19} $end={0}>
              Insert
              <Caret />
            </GroupTitle>
          </Group>
        </Ribbon>
        <SelectionBar $pad={5}>
          <ToolButton $width={5} aria-label="View options"><Caret /></ToolButton>
          <ToolButton $width={7} aria-label="Spacer" />
          {(["program", "tool", "geometry", "method"] as NavKind[]).map((kind, i) => (
            <ToolButton key={kind} $on={i === 0} aria-label={`${kind} view`}>
              <NavViewIcon kind={kind} />
            </ToolButton>
          ))}
          <Divider />
        </SelectionBar>
        <NavTitle>
          <bdi>Operation Navigator - Prog</bdi>
        </NavTitle>
        <NavHeader>me</NavHeader>
        <TreeList>
          {navNodes.map((n) => (
            <TreeRow key={n.name}>
              <NavGuide kind={n.kind} />
              <TreeLabel $selected={n.selected} $flush={n.kind === "root"}>{n.name}</TreeLabel>
            </TreeRow>
          ))}
        </TreeList>
      </Pane>

      <Dialog aria-label="Operation settings">
        <DialogTitle>
          <svg width="300" height="5" viewBox="0 0 300 5">
            <path d="M103 0Q106 3 108 0M215 0L218 1M265 2.500H271M280 0L283 1" stroke="#fff" fill="none" />
          </svg>
        </DialogTitle>
        <FindRow>
          <Binoculars />
          Find
          <FindInput type="text" />
        </FindRow>
        <DialogBody>
          <SidePanel>
            <TreeList>
              {dialogNodes.map((n, i) => (
                <TreeRow key={n.name}>
                  <DialogGuide node={n} index={i} />
                  <TreeLabel $selected={n.selected}>{n.name}</TreeLabel>
                </TreeRow>
              ))}
            </TreeList>
          </SidePanel>
          <MainPanel>
            <Section>
              <SectionHead>
                Geometry Advanced
                <SectionHeadArrow>
                  <svg width="12" height="9" viewBox="0 0 12 9">
                    <path d="M1 8L6 2 11 8" fill="none" stroke={teal} strokeWidth="2" />
                  </svg>
                </SectionHeadArrow>
              </SectionHead>
              <FieldRow $top>
                <FieldLabel htmlFor="geometry" $top>Geometry</FieldLabel>
                <SelectBox>
                  <Select id="geometry" defaultValue="MCS">
                    <option>MCS</option>
                  </Select>
                  <svg width="7" height="4" viewBox="0 0 7 4">
                    <path d="M0 0H7L3.500 4Z" fill="#111" />
                  </svg>
                </SelectBox>
                <IconButton aria-label="New geometry"><GeometryNewIcon /></IconButton>
                <IconButton aria-label="Edit geometry"><WrenchIcon /></IconButton>
              </FieldRow>
              {upperFields.map((f) => <FieldLine key={f.name} field={f} />)}
              <CheckRow>
                <CheckBox type="checkbox" defaultChecked />
                Automatic Walls
              </CheckRow>
              {lowerFields.map((f) => <FieldLine key={f.name} field={f} />)}
            </Section>
          </MainPanel>
        </DialogBody>
      </Dialog>

      <Pane>
        <QuickBar />
        <TabBar $gap={30}>
          <Tab $clipped>PMI</Tab>
          <Tab>StarCAM-CAM Tools</Tab>
          <Tab>StarCAM-Electrode Tools</Tab>
          <Tab>StarCAM V7.80</Tab>
        </TabBar>
        <Ribbon>
          <Group $width={59}>
            <GroupBody $pad={12}>
              <BigButton $width={46}>
                <IconSlot $framed><MoreIcon /></IconSlot>
                <span>More</span>
                <CaretSlot><Caret /></CaretSlot>
              </BigButton>
            </GroupBody>
            <GroupTitle>
              <span />
              <Caret />
            </GroupTitle>
          </Group>
          <Group $width={152}>
            <GroupBody $pad={12}>
              <PlayerGrid>
                <RoundButton $column={1} aria-label="Play backward"><PlayerIcon kind="back" /></RoundButton>
                <RoundButton $column={3} aria-label="Pause"><PlayerIcon kind="pause" /></RoundButton>
                <RoundButton $column={5} aria-label="Play"><PlayerIcon kind="play" /></RoundButton>
                <RoundButton $column={1} aria-label="Step back"><PlayerIcon kind="first" /></RoundButton>
                <Caret />
                <Spinner>
                  <SpinnerInput aria-label="Animation speed" defaultValue="5" />
                  <SpinnerButtons>
                    <button aria-label="Faster"><Caret up /></button>
                    <button aria-label="Slower"><Caret /></button>
                  </SpinnerButtons>
                </Spinner>
                <RoundButton $column={5} aria-label="Step forward"><PlayerIcon kind="last" /></RoundButton>
                <Caret />
              </PlayerGrid>
            </GroupBody>
            <GroupTitle $pad={13}>
              Tool Path Animation
              <Caret />
            </GroupTitle>
          </Group>
          <Group $width={144}>
            <GroupBody $pad={8}>
              <BigButton $width={46} $muted>
                <IconSlot><RobotIcon kind="move" /></IconSlot>
                <span>Robot</span>
                <span>Control</span>
              </BigButton>
              <BigButton $width={42} $muted>
                <IconSlot><RobotIcon kind="wrench" /></IconSlot>
                <span>Edit</span>
                <span>Rules</span>
              </BigButton>
              <BigButton $width={40} $muted>
                <IconSlot><RobotIcon kind="check" /></IconSlot>
                <span>Apply</span>
                <span>Rules</span>
              </BigButton>
            </GroupBody>
            <GroupTitle>
              Robotic Machining
              <Caret />
            </GroupTitle>
          </Group>
          <Group $width={136}>
            <GroupBody $pad={12}>
              <Commands>
                <Command $muted>
                  <DisplayIpwIcon />
                  <CommandText>Display IPW</CommandText>
                </Command>
                <Command>
                  <ShowIpwIcon />
                  <CommandText>Show 3D IPW</CommandText>
                  <Caret />
                </Command>
              </Commands>
            </GroupBody>
            <GroupTitle $pad={48}>
              IPW
              <Caret />
            </GroupTitle>
          </Group>
          <Group $width={60} $last>
            <GroupBody $pad={8}>
              <BigButton $width={40} $muted>
                <IconSlot><MoveFaceIcon /></IconSlot>
                <span>Move</span>
                <span>Face</span>
              </BigButton>
            </GroupBody>
          </Group>
        </Ribbon>
        <SelectionBar>
          <ComboEnd aria-label="Selection filter">
            <svg width="7" height="4" viewBox="0 0 7 4">
              <path d="M0 0H7L3.500 4Z" fill="#999" />
            </svg>
          </ComboEnd>
          <ToolButton $width={34} aria-label="Bodies"><GlyphIcon d={glyphs.blocks} fill="#e3e3e3" /></ToolButton>
          <ToolButton $width={18} aria-label="Chain"><GlyphIcon d={glyphs.chain} /></ToolButton>
          <ToolButton $width={32} aria-label="Reset filter"><GlyphIcon d={glyphs.funnelBack} /></ToolButton>
          <ToolButton $width={18} aria-label="Filter list"><GlyphIcon d={glyphs.funnelList} color="#333" /></ToolButton>
          <ToolButton $width={14} aria-label="Filter options"><Caret /></ToolButton>
          <ToolButton $width={26} aria-label="Snap"><GlyphIcon d={glyphs.target} /></ToolButton>
          <ToolButton aria-label="Hierarchy"><GlyphIcon d={glyphs.tree} /></ToolButton>
          <ToolButton $width={26} aria-label="Polygon"><GlyphIcon d={glyphs.hexagon} /></ToolButton>
          <ToolButton aria-label="Face snap"><GlyphIcon d={glyphs.cubeTarget} /></ToolButton>
          <ToolButton $width={26} aria-label="Box select"><GlyphIcon d={glyphs.boxTarget} /></ToolButton>
          <ToolButton $width={14} aria-label="Box select options"><Caret /></ToolButton>
          <ToolButton $width={26} aria-label="Shaded"><GlyphIcon d={glyphs.cube} color="#c6c6c6" fill="#f0f0f0" /></ToolButton>
          <ToolButton $width={28} aria-label="Clip section">
            <svg width="18" height="18" viewBox="0 0 18 18">
              <path d={glyphs.cubeOpen} fill="#cfcfcf" stroke="#777" />
              <path d="M8 1L15 4V13L9 9Z" fill="none" stroke="#d9713c" strokeWidth="1.400" />
            </svg>
          </ToolButton>
          <MenuButton>常用工具<Caret /></MenuButton>
          <MenuButton>图层工具<Caret /></MenuButton>
          <ToolButton $width={20} aria-label="Assembly"><GlyphIcon d={glyphs.box} fill="#e3e3e3" /></ToolButton>
          <ToolButton $width={34} aria-label="Plate"><GlyphIcon d={glyphs.plate} fill="#ccc" /></ToolButton>
          <ToolButton $width={20} aria-label="Move"><GlyphIcon d={glyphs.chain} /></ToolButton>
        </SelectionBar>
        <DocumentBar />
        <Viewport>
          <Scene />
        </Viewport>
      </Pane>
    </Shell>
  );
}
